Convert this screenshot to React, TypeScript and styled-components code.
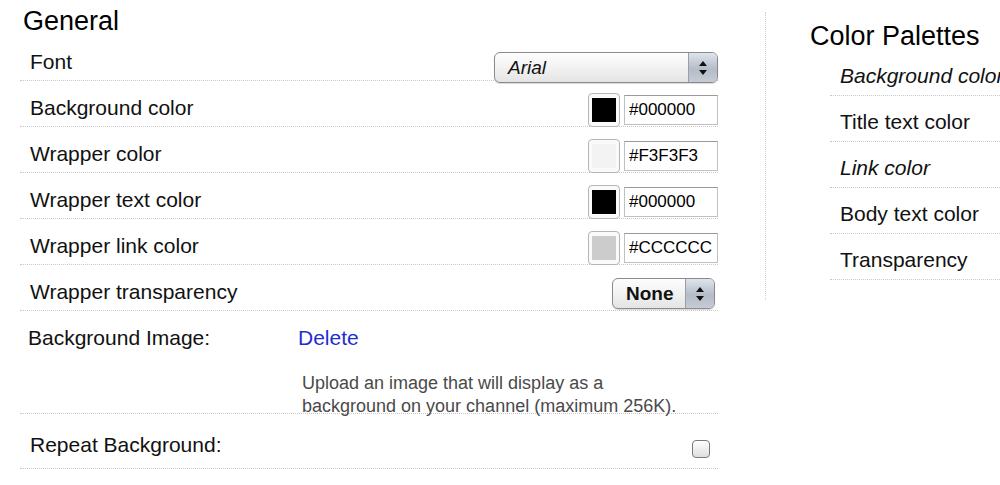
import styled, { createGlobalStyle } from 'styled-components';

const GlobalStyle = createGlobalStyle`
    html, body {
        margin: 0;
        padding: 0;
        background: #fff;
        overflow: hidden;
    }
    body {
        font-family: "Liberation Sans", Arial, sans-serif;
        color: #111;
    }
`;

const Page = styled.div`
    display: flex;
    align-items: flex-start;
    width: 1000px;
    height: 485px;
    overflow: hidden;
`;

const LeftPanel = styled.section`
    width: 698px;
    margin-left: 20px;
    padding-top: 5px;
    flex-shrink: 0;
`;

const RightPanel = styled.section`
    margin-left: 47px;
    margin-top: 12px;
    height: 288px;
    border-left: 1px dotted #cfcfcf;
    padding-left: 44px;
    flex-shrink: 0;
    width: 300px;
`;

const Heading = styled.h2<{ $inset?: number; $top?: number }>`
    margin: 0;
    padding: ${p => p.$top ?? 0}px 0 0 ${p => p.$inset ?? 0}px;
    font-size: 27px;
    font-weight: normal;
    line-height: 28px;
    color: #000;
`;

const Row = styled.div<{ $height?: number }>`
    display: flex;
    align-items: center;
    justify-content: space-between;
    box-sizing: border-box;
    height: ${p => p.$height ?? 46}px;
    padding: 8px 0 0 10px;
    border-bottom: 1px dotted #c8c8c8;
`;

const Label = styled.span<{ $italic?: boolean }>`
    font-size: 21px;
    line-height: 24px;
    white-space: nowrap;
    font-style: ${p => (p.$italic ? 'italic' : 'normal')};
`;

const SelectBox = styled.div<{ $width: number; $right?: number; $drop?: number }>`
    display: flex;
    align-items: stretch;
    width: ${p => p.$width}px;
    height: 31px;
    margin-right: ${p => p.$right ?? 0}px;
    margin-top: ${p => p.$drop ?? 0}px;
    border: 1px solid #8a8a8a;
    border-radius: 6px;
    overflow: hidden;
    box-sizing: border-box;
    background: linear-gradient(#fdfdfd, #f2f2f2 50%, #e4e4e4);
    box-shadow: 0 1px 1px rgba(0, 0, 0, 0.15);
`;

const SelectText = styled.span<{ $italic?: boolean; $bold?: boolean }>`
    flex: 1;
    display: flex;
    align-items: center;
    padding-left: 13px;
    font-size: 19px;
    color: #111;
    font-style: ${p => (p.$italic ? 'italic' : 'normal')};
    font-weight: ${p => (p.$bold ? 'bold' : 'normal')};
`;

const SelectArrows = styled.span`
    width: 28px;
    display: flex;
    align-items: center;
    justify-content: center;
    border-left: 1px solid #9aa0aa;
    background: linear-gradient(#dfe4ec, #b4bcc8 55%, #c6ccd6);
`;

const ColorField = styled.div`
    display: flex;
    align-items: center;
    gap: 4px;
    margin-top: 4px;
`;

const Swatch = styled.span<{ $color: string }>`
    width: 32px;
    height: 34px;
    box-sizing: border-box;
    border: 1px solid #b5b5b5;
    border-radius: 4px;
    background: #fafafa;
    display: flex;
    align-items: center;
    justify-content: center;

    &::after {
        content: '';
        width: 24px;
        height: 24px;
        background: ${p => p.$color};
    }
`;

const HexInput = styled.input`
    width: 94px;
    height: 30px;
    box-sizing: border-box;
    border: 1px solid #c0c0c0;
    border-top-color: #9a9a9a;
    padding: 0 0 0 4px;
    font-family: "Liberation Sans", Arial, sans-serif;
    font-size: 17px;
    color: #000;
    outline: none;
`;

const ImageRow = styled.div`
    box-sizing: border-box;
    height: 103px;
    padding: 15px 0 0 8px;
    border-bottom: 1px dotted #c8c8c8;
`;

const ImageTop = styled.div`
    display: grid;
    grid-template-columns: 270px 1fr;
    align-items: center;
`;

const DeleteLink = styled.a`
    font-size: 21px;
    line-height: 24px;
    color: #1f2fd0;
    text-decoration: none;
    cursor: pointer;
`;

const Hint = styled.p`
    margin: 22px 0 0 274px;
    font-size: 18px;
    line-height: 23px;
    color: #4a4a4a;
`;

const CheckBox = styled.span`
    width: 18px;
    height: 18px;
    margin-right: 8px;
    margin-top: 8px;
    box-sizing: border-box;
    border: 1px solid #7a7a7a;
    border-radius: 4px;
    background: linear-gradient(#ffffff, #dedede);
`;

const PaletteList = styled.div`
    margin-left: 20px;
`;

const PaletteRow = styled.div`
    box-sizing: border-box;
    height: 46px;
    padding: 14px 0 0 10px;
    border-bottom: 1px dotted #c8c8c8;
`;

function Arrows() {
    return (
        <SelectArrows>
            <svg width="10" height="16" viewBox="0 0 10 16">
                <path d="M5 1 L9 6 H1 Z" fill="#111" />
                <path d="M5 15 L9 10 H1 Z" fill="#111" />
            </svg>
        </SelectArrows>
    );
}

const colorRows = [
    { label: 'Background color', value: '#000000' },
    { label: 'Wrapper color', value: '#F3F3F3' },
    { label: 'Wrapper text color', value: '#000000' },
    { label: 'Wrapper link color', value: '#CCCCCC' },
];

const palettes = [
    { label: 'Background color', italic: true },
    { label: 'Title text color' },
    { label: 'Link color', italic: true },
    { label: 'Body text color' },
    { label: 'Transparency' },
];

export default function App() {
    return (
        <>
            <GlobalStyle />
            <Page>
                <LeftPanel>
                    <Heading $inset={3} $top={2}>General</Heading>

                    <Row>
                        <Label>Font</Label>
                        <SelectBox $width={224} $drop={12}>
                            <SelectText $italic>Arial</SelectText>
                            <Arrows />
                        </SelectBox>
                    </Row>

                    {colorRows.map(r => (
                        <Row key={r.label}>
                            <Label>{r.label}</Label>
                            <ColorField>
                                <Swatch $color={r.value} />
                                <HexInput defaultValue={r.value} />
                            </ColorField>
                        </Row>
                    ))}

                    <Row>
                        <Label>Wrapper transparency</Label>
                        <SelectBox $width={103} $right={3} $drop={4}>
                            <SelectText $bold>None</SelectText>
                            <Arrows />
                        </SelectBox>
                    </Row>

                    <ImageRow>
                        <ImageTop>
                            <Label>Background Image:</Label>
                            <DeleteLink>Delete</DeleteLink>
                        </ImageTop>
                        <Hint>
                            Upload an image that will display as a<br />
                            background on your channel (maximum 256K).
                        </Hint>
                    </ImageRow>

                    <Row $height={55}>
                        <Label>Repeat Background:</Label>
                        <CheckBox />
                    </Row>
                </LeftPanel>

                <RightPanel>
                    <Heading $top={10}>Color Palettes</Heading>
                    <PaletteList>
                        {palettes.map(p => (
                            <PaletteRow key={p.label}>
                                <Label $italic={p.italic}>{p.label}</Label>
                            </PaletteRow>
                        ))}
                    </PaletteList>
                </RightPanel>
            </Page>
        </>
    );
}
